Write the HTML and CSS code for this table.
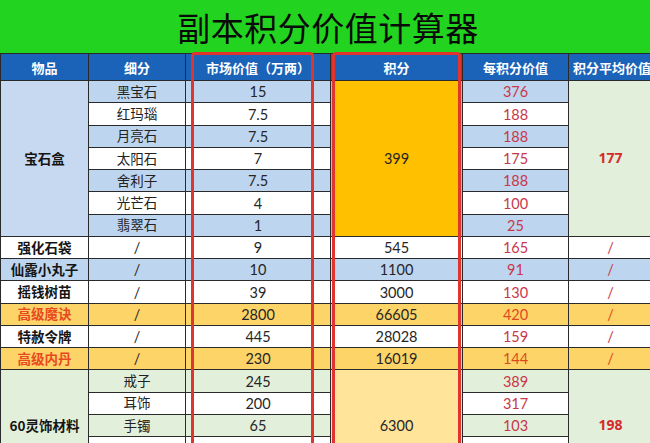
FILE: index.html
```html
<!DOCTYPE html>
<html lang="zh-CN">
<head>
<meta charset="utf-8">
<title>副本积分价值计算器</title>
<link rel="stylesheet" href="styles.css">
</head>
<body>
<div class="sheet">
  <div class="title">副本积分价值计算器</div>
  <table class="grid">
    <colgroup>
      <col class="c1"><col class="c2"><col class="c3"><col class="c4"><col class="c5"><col class="c6">
    </colgroup>
    <thead>
      <tr class="head">
        <th>物品</th><th>细分</th><th>市场价值（万两）</th><th>积分</th><th>每积分价值</th><th class="clip">积分平均价值</th>
      </tr>
    </thead>
    <tbody>
      <tr class="blue">
        <td rowspan="7" class="item gem">宝石盒</td><td>黑宝石</td><td class="num">15</td>
        <td rowspan="7" class="num pts-orange">399</td><td class="num red">376</td>
        <td rowspan="7" class="avg green-m">177</td>
      </tr>
      <tr class="white"><td>红玛瑙</td><td class="num">7.5</td><td class="num red">188</td></tr>
      <tr class="blue"><td>月亮石</td><td class="num">7.5</td><td class="num red">188</td></tr>
      <tr class="white"><td>太阳石</td><td class="num">7</td><td class="num red">175</td></tr>
      <tr class="blue"><td>舍利子</td><td class="num">7.5</td><td class="num red">188</td></tr>
      <tr class="white"><td>光芒石</td><td class="num">4</td><td class="num red">100</td></tr>
      <tr class="blue"><td>翡翠石</td><td class="num">1</td><td class="num red">25</td></tr>
      <tr class="white"><td class="item">强化石袋</td><td class="num">/</td><td class="num">9</td><td class="num">545</td><td class="num red">165</td><td class="num red">/</td></tr>
      <tr class="blue"><td class="item">仙露小丸子</td><td class="num">/</td><td class="num">10</td><td class="num">1100</td><td class="num red">91</td><td class="num red">/</td></tr>
      <tr class="white"><td class="item">摇钱树苗</td><td class="num">/</td><td class="num">39</td><td class="num">3000</td><td class="num red">130</td><td class="num red">/</td></tr>
      <tr class="gold"><td class="item hot">高级魔诀</td><td class="num">/</td><td class="num">2800</td><td class="num">66605</td><td class="num orange">420</td><td class="num orange">/</td></tr>
      <tr class="white"><td class="item">特赦令牌</td><td class="num">/</td><td class="num">445</td><td class="num">28028</td><td class="num red">159</td><td class="num red">/</td></tr>
      <tr class="gold"><td class="item hot">高级内丹</td><td class="num">/</td><td class="num">230</td><td class="num">16019</td><td class="num orange">144</td><td class="num orange">/</td></tr>
      <tr class="green">
        <td rowspan="5" class="item green-m">60灵饰材料</td><td>戒子</td><td class="num">245</td>
        <td rowspan="5" class="num pts-yellow">6300</td><td class="num red">389</td>
        <td rowspan="5" class="avg green-m">198</td>
      </tr>
      <tr class="white"><td>耳饰</td><td class="num">200</td><td class="num red">317</td></tr>
      <tr class="green"><td>手镯</td><td class="num">65</td><td class="num red">103</td></tr>
      <tr class="white"><td></td><td class="num"></td><td class="num red"></td></tr>
      <tr class="green"><td></td><td class="num"></td><td class="num red"></td></tr>
    </tbody>
  </table>
  <div class="mark mark-price"></div>
  <div class="mark mark-points"></div>
</div>
</body>
</html>
```
FILE: styles.css
```css
* { box-sizing: border-box; }
html, body { margin: 0; padding: 0; background: #ffffff; }
.sheet {
  position: relative;
  width: 650px;
  height: 443px;
  overflow: hidden;
  font-family: "Noto Sans CJK SC", "Noto Sans", sans-serif;
  color: #222222;
}
.title {
  height: 53px;
  background: #22d41f;
  display: flex;
  align-items: center;
  justify-content: center;
  padding-left: 6px;
  padding-top: 2px;
  font-size: 33px;
  font-weight: 400;
  letter-spacing: 0.5px;
  color: #0a0a0a;
  line-height: 1;
}
.grid {
  table-layout: fixed;
  border-collapse: collapse;
  width: 652px;
  font-size: 13.5px;
}
.c1 { width: 88px; }
.c2 { width: 97px; }
.c3 { width: 145px; }
.c4 { width: 132px; }
.c5 { width: 106px; }
.c6 { width: 84px; }
.grid th, .grid td {
  border: 1px solid #2a2a2a;
  padding: 0;
  text-align: center;
  vertical-align: middle;
  white-space: nowrap;
  line-height: 1;
}
.head th {
  height: 27px;
  background: #1a63b8;
  color: #ffffff;
  font-weight: 700;
  font-size: 13px;
}
.head th.clip { text-align: left; padding-left: 4px; overflow: visible; }
tbody tr { height: 22.25px; }
.blue td { background: #bdd5ee; }
.white td { background: #ffffff; }
.gold td { background: #fdd468; }
.green td { background: #e2efda; }
.grid td.gem { background: #c6d9f0; }
.grid td.green-m { background: #e2efda; }
.grid td.pts-orange { background: #ffc000; }
.grid td.pts-yellow { background: #ffe49a; }
.item { font-weight: 700; font-size: 13.5px; color: #151515; }
.item.hot { color: #e8491f; }
.num {
  font-family: Lato, "Noto Sans", sans-serif;
  font-size: 14.5px;
  color: #262626;
  padding-top: 2px;
}
.grid td.num { padding-top: 2px; }
.num.red { color: #c9374a; }
.num.orange { color: #dc4a22; }
.avg {
  font-family: "Open Sans", "Noto Sans", sans-serif;
  font-weight: 700;
  font-size: 14px;
  color: #d52a2a;
}
.mark {
  position: absolute;
  top: 52px;
  height: 420px;
  border: 3px solid #e0342e;
  border-radius: 4px 4px 0 0;
  pointer-events: none;
}
.mark-price { left: 191px; width: 123px; }
.mark-points { left: 332px; width: 129px; }
```
